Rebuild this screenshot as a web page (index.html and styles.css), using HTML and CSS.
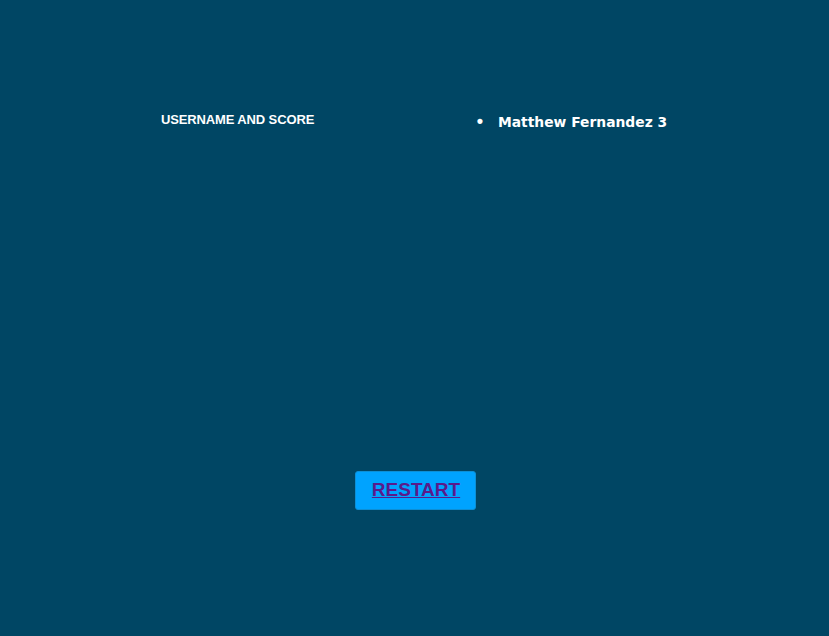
FILE: index.html
```html
<!DOCTYPE html>
<html>
<head>
<meta charset="utf-8">
<link rel="stylesheet" href="styles.css">
</head>
<body>
<div class="page">
  <div class="scores">
    <h2 class="title">USERNAME AND SCORE</h2>
    <ul class="list">
      <li>Matthew Fernandez 3</li>
    </ul>
  </div>
  <div class="actions">
    <a class="restart" href="#">RESTART</a>
  </div>
</div>
</body>
</html>
```
FILE: styles.css
```css
html, body {
  margin: 0;
  padding: 0;
  background: #004664;
  height: 100%;
}
body {
  font-family: "Liberation Sans", Arial, sans-serif;
}
.page {
  height: 636px;
  display: flex;
  flex-direction: column;
}
.scores {
  display: flex;
  align-items: flex-start;
  padding-top: 111px;
}
.title {
  margin: 1px 0 0 161px;
  width: 297px;
  font-size: 13px;
  letter-spacing: -0.13px;
  font-weight: bold;
  color: #ffffff;
  line-height: 16px;
}
.list {
  margin: 0;
  padding-left: 40px;
  height: 21px;
  list-style: disc;
  color: #ffffff;
  font-family: "DejaVu Sans", Verdana, sans-serif;
  font-size: 13.85px;
  font-weight: bold;
  line-height: 20px;
}
.list li::marker {
  content: "\2022\00a0\00a0\00a0";
  font-family: "Liberation Sans", Arial, sans-serif;
  font-size: 18px;
}
.actions {
  margin-top: 339px;
  padding-left: 2px;
  display: flex;
  justify-content: center;
}
.restart {
  display: inline-block;
  background: #00a3ff;
  color: #5a1a8b;
  font-size: 19px;
  font-weight: bold;
  padding: 8px 15px 9px 16px;
  border-radius: 3px;
  border: 1px solid #0d8fd6;
  text-decoration: underline;
  line-height: 20px;
}
```
